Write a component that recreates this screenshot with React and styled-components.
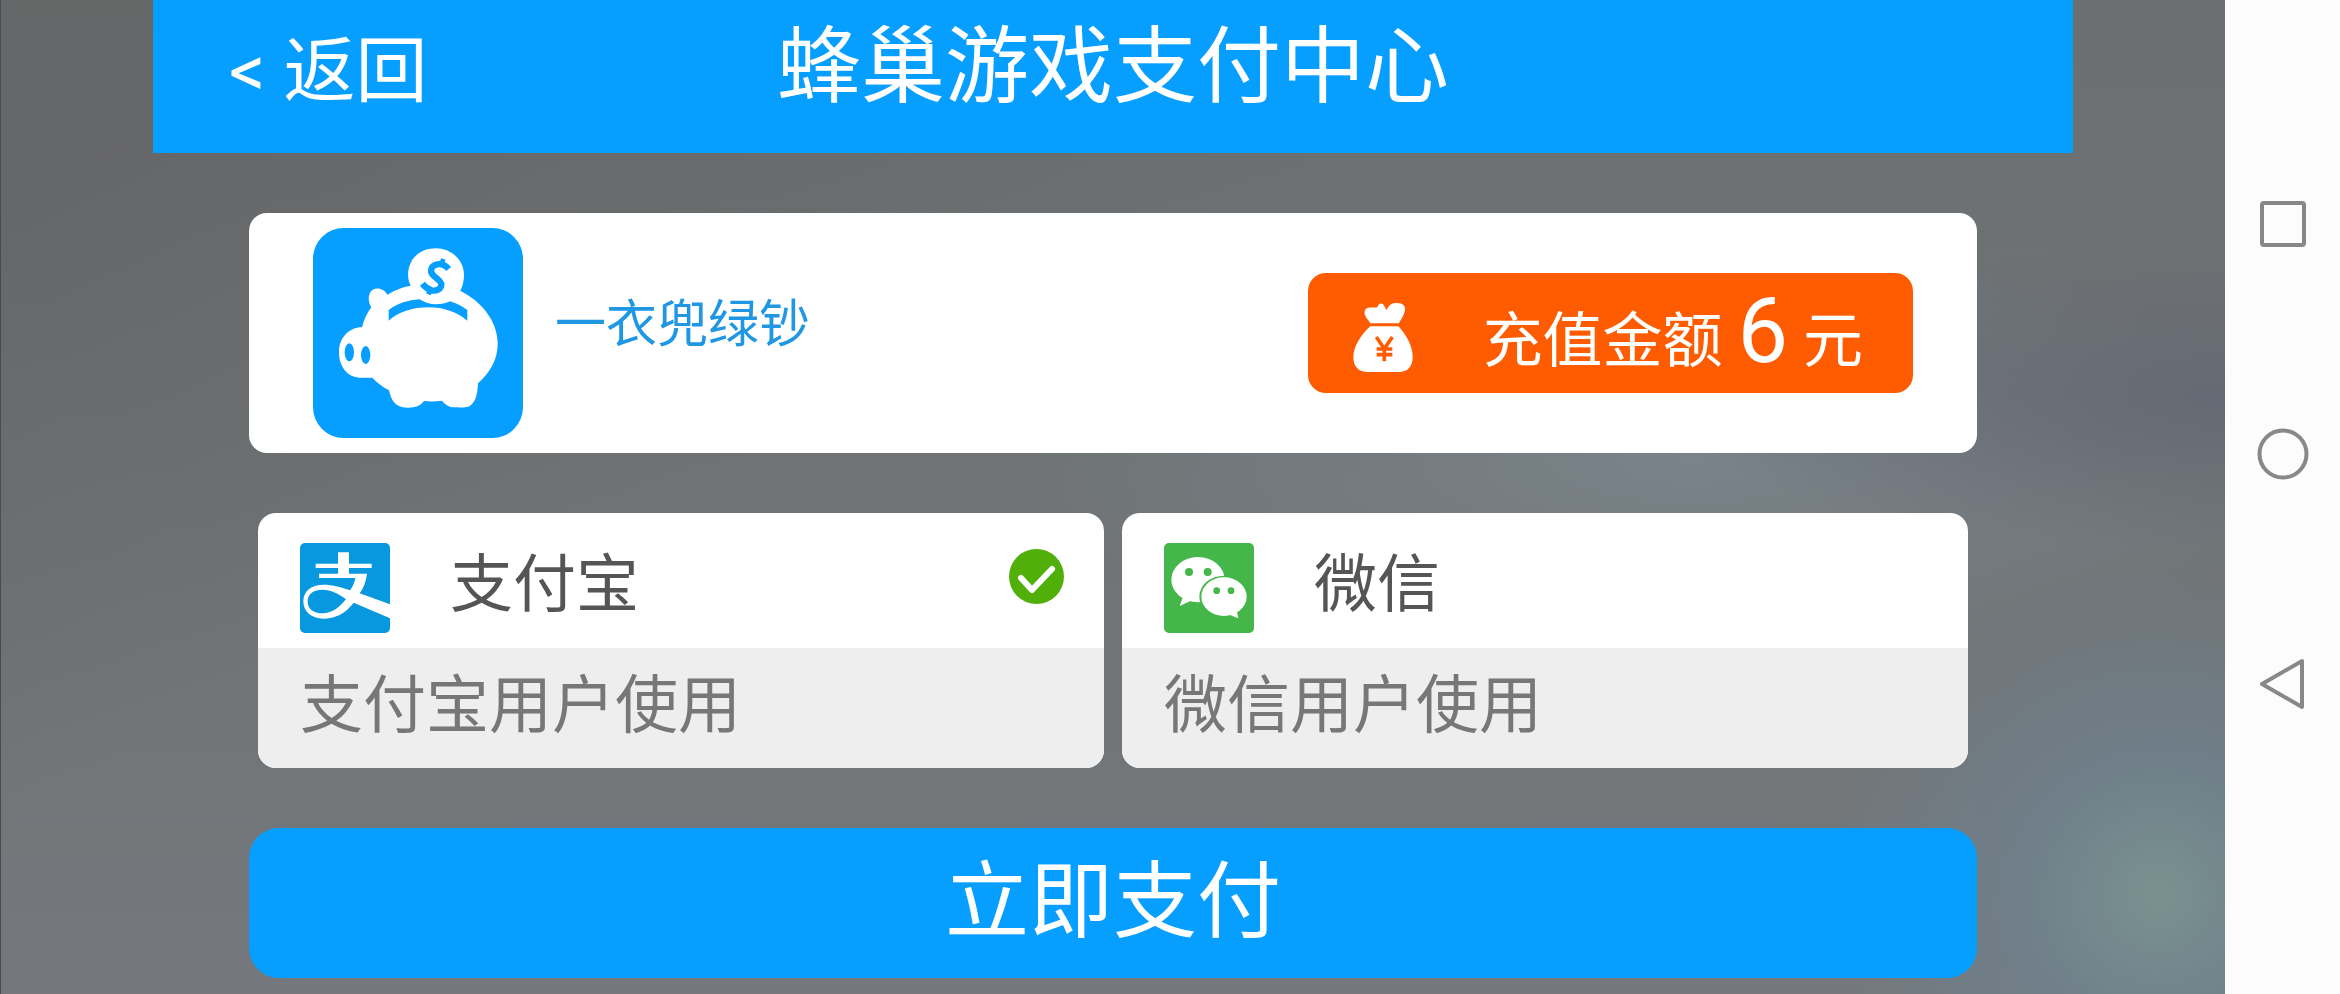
import React, { useState } from "react";
//Styling
import styled, { createGlobalStyle } from "styled-components";

//Brand and Payment Icons
const PiggyBank = () => (
  <svg viewBox="15 16 630 630" width="210" height="210" aria-hidden="true">
    <rect x="15" y="16" width="630" height="630" rx="92" fill="#079fff" />
    <path
      fill="#fff"
      d="M162 314C168 290 178 270 190 254C180 240 178 212 194 201C210 192 230 200 238 216C262 201 284 193 308 189C296 165 298 137 312 113C326 90 354 77 384 77C430 77 468 112 468 157C468 174 464 190 457 205C520 235 569 296 569 362C569 410 548 448 510 482C509 510 504 535 490 546C480 555 464 555 440 554C422 554 412 546 402 534C384 537 364 537 348 535C336 550 324 555 300 555C262 556 250 534 243 503C224 493 206 479 193 465H156C120 465 93 434 93 389C93 346 122 314 162 314Z"
    />
    <path
      fill="#079fff"
      d="M242 262C270 242 300 232 335 230C350 240 366 245 384 245C400 245 414 242 426 236C446 242 464 252 478 262V294C446 268 408 254 362 254C312 254 272 268 242 294Z"
    />
    <ellipse cx="124" cy="389" rx="14" ry="27" fill="#079fff" />
    <ellipse cx="173" cy="397" rx="14" ry="27" fill="#079fff" />
    <path
      fill="none"
      stroke="#079fff"
      strokeWidth="19"
      d="M422 139C414 129 402 123 388 125C370 128 365 143 373 155C382 168 400 172 400 186C399 200 384 206 371 203C357 199 351 193 343 183"
    />
    <path
      stroke="#079fff"
      strokeWidth="14"
      d="M399 128L406 109M368 199L361 215"
    />
  </svg>
);

const MoneyBag = () => (
  <svg viewBox="40 31 180 207" width="60" height="69" aria-hidden="true">
    <path
      fill="#fff"
      d="M92 92C86 80 72 70 75 56C78 40 100 46 113 44C116 30 130 28 135 42L140 52C148 42 150 32 168 31C186 30 197 38 196 50C195 66 184 80 178 92Z"
    />
    <path
      fill="#fff"
      d="M92 101H176C198 124 220 160 219 194C219 218 206 238 180 238H82C54 238 41 218 41 194C41 160 66 124 92 101Z"
    />
    <path
      fill="none"
      stroke="#ff5b00"
      strokeWidth="11"
      d="M110 133L134 168L158 133M134 166V206M111 169H158M111 186H158"
    />
  </svg>
);

const Alipay = () => (
  <svg viewBox="0 0 270 270" width="90" height="90" aria-hidden="true">
    <rect width="270" height="270" rx="15" fill="#0898e0" />
    <path
      fill="#fff"
      d="M114 28H147V62H215V75H147V92H201C198 117 190 136 179 151L271 184V226L161 179C136 212 104 227 70 227C34 227 10 206 10 175C10 144 34 125 70 125C98 125 126 133 150 142C159 131 163 119 166 105H57V92H114V75H47V62H114ZM138 168C116 152 92 140 68 140C40 140 23 152 23 176C23 197 40 211 68 211C98 211 121 190 138 168Z"
    />
  </svg>
);

const Wechat = () => (
  <svg viewBox="14 14 270 270" width="90" height="90" aria-hidden="true">
    <rect x="14" y="14" width="270" height="270" rx="15" fill="#45b649" />
    <ellipse cx="116" cy="124" rx="80" ry="68" fill="#fff" />
    <path d="M72 172L61 203L98 186Z" fill="#fff" />
    <ellipse cx="194" cy="175" rx="74" ry="63" fill="#45b649" />
    <ellipse cx="194" cy="175" rx="68" ry="58" fill="#fff" />
    <path d="M206 228L237 240L231 212Z" fill="#fff" />
    <circle cx="89" cy="101" r="12" fill="#45b649" />
    <circle cx="145" cy="101" r="12" fill="#45b649" />
    <circle cx="172" cy="157" r="10" fill="#45b649" />
    <circle cx="215" cy="157" r="10" fill="#45b649" />
  </svg>
);

const CheckBadge = () => (
  <svg viewBox="0 0 55 55" width="55" height="55" aria-hidden="true">
    <circle cx="27.5" cy="27.5" r="27.5" fill="#51af0a" />
    <path
      d="M12 29L23 41L43 20"
      fill="none"
      stroke="#fff"
      strokeWidth="6"
      strokeLinecap="round"
      strokeLinejoin="round"
    />
  </svg>
);

const methods = [
  { id: "alipay", name: "支付宝", note: "支付宝用户使用", Icon: Alipay },
  { id: "wechat", name: "微信", note: "微信用户使用", Icon: Wechat },
];

const App = () => {
  const [selected, setSelected] = useState("alipay");

  return (
    <>
      <GlobalStyle />
      <Screen>
        <Backdrop>
          <Header>
            <BackButton type="button">&lt; 返回</BackButton>
            <Title>蜂巢游戏支付中心</Title>
          </Header>
          <Content>
            <Order>
              <PiggyBank />
              <Product>一衣兜绿钞</Product>
              <Amount>
                <MoneyBag />
                <p>
                  充值金额 <strong>6</strong> 元
                </p>
              </Amount>
            </Order>
            <Methods>
              {methods.map(({ id, name, note, Icon }) => (
                <Method key={id}>
                  <input
                    type="radio"
                    name="method"
                    value={id}
                    checked={selected === id}
                    onChange={() => setSelected(id)}
                  />
                  <MethodHead>
                    <Icon />
                    <MethodName>{name}</MethodName>
                    {selected === id && (
                      <Badge>
                        <CheckBadge />
                      </Badge>
                    )}
                  </MethodHead>
                  <MethodNote>{note}</MethodNote>
                </Method>
              ))}
            </Methods>
            <PayButton type="button">立即支付</PayButton>
          </Content>
        </Backdrop>
        {/* Android system keys, landscape */}
        <SystemBar aria-label="系统导航">
          <SystemKey type="button" aria-label="最近任务">
            <svg viewBox="0 0 54 54" width="54" height="54">
              <rect x="6" y="6" width="42" height="42" rx="2" />
            </svg>
          </SystemKey>
          <SystemKey type="button" aria-label="主屏幕">
            <svg viewBox="0 0 54 54" width="54" height="54">
              <circle cx="27" cy="27" r="23.5" />
            </svg>
          </SystemKey>
          <SystemKey type="button" aria-label="返回上一页">
            <svg viewBox="0 0 54 54" width="54" height="54">
              <path d="M6 27L46 4V50Z" />
            </svg>
          </SystemKey>
        </SystemBar>
      </Screen>
    </>
  );
};

const GlobalStyle = createGlobalStyle`
  * {
    margin: 0;
    padding: 0;
    box-sizing: border-box;
  }
  body {
    font-family: Roboto, "Noto Sans CJK SC", sans-serif;
  }
  button {
    font: inherit;
    border: none;
    background: none;
    cursor: pointer;
  }
  svg {
    display: block;
    flex-shrink: 0;
  }
`;

const Screen = styled.div`
  display: flex;
  min-height: 100vh;
`;

const Backdrop = styled.main`
  flex: 1;
  min-width: 0;
  padding: 0 152px;
  border-left: 1px solid #4a4b4c;
  background:
    radial-gradient(circle at 97% 90%, rgba(122, 150, 148, 0.85), rgba(108, 134, 152, 0.5) 6%, transparent 14%),
    radial-gradient(ellipse at 100% 40%, rgba(98, 102, 114, 0.8), transparent 18%),
    radial-gradient(ellipse at 76% 46%, rgba(126, 138, 146, 0.7), transparent 28%),
    linear-gradient(155deg, rgba(100, 100, 101, 0.8) 10%, transparent 40%),
    linear-gradient(to bottom, #6b6f70, #6f7375 45%, #74787c);
`;

const Header = styled.header`
  display: grid;
  grid-template-columns: 1fr auto 1fr;
  align-items: baseline;
  padding: 0 76px 17px;
  background: #079fff;
  color: #fff;
`;

const BackButton = styled.button`
  justify-self: start;
  color: #fff;
  font-size: 72px;
  line-height: 100px;
`;

const Title = styled.h1`
  font-size: 84px;
  font-weight: 400;
  line-height: 136px;
`;

const Content = styled.div`
  display: flex;
  flex-direction: column;
  gap: 60px;
  padding: 60px 5% 15px;
`;

const Order = styled.section`
  display: flex;
  align-items: center;
  padding: 15px 64px;
  border-radius: 18px;
  background: #fff;
`;

const Product = styled.h2`
  flex: 1;
  padding: 0 32px 16px;
  color: #1f97e3;
  font-size: 51px;
  font-weight: 400;
  line-height: 60px;
`;

const Amount = styled.div`
  display: flex;
  align-items: center;
  gap: 70px;
  height: 120px;
  padding: 8px 50px 0 45px;
  border-radius: 18px;
  background: #ff5b00;
  color: #fff;
  font-size: 60px;
  line-height: 60px;
  strong {
    font-size: 90px;
    font-weight: 400;
  }
`;

const Methods = styled.fieldset`
  display: grid;
  grid-template-columns: 1fr 1fr;
  gap: 18px;
  padding: 0 9px;
  border: none;
`;

const Method = styled.label`
  position: relative;
  overflow: hidden;
  border-radius: 18px;
  background: #fff;
  cursor: pointer;
  input {
    position: absolute;
    opacity: 0;
  }
`;

const MethodHead = styled.div`
  display: flex;
  gap: 60px;
  padding: 30px 40px 15px 42px;
`;

const MethodName = styled.span`
  flex: 1;
  color: #555;
  font-size: 63px;
  line-height: 84px;
`;

const Badge = styled.span`
  padding-top: 6px;
`;

const MethodNote = styled.p`
  padding: 0 42px 4px;
  background: #eee;
  color: #777;
  font-size: 63px;
  line-height: 116px;
`;

const PayButton = styled.button`
  border-radius: 30px;
  background: #079fff;
  color: #fff;
  font-size: 84px;
  line-height: 150px;
`;

const SystemBar = styled.nav`
  display: flex;
  flex-direction: column;
  align-items: center;
  gap: 176px;
  width: 115px;
  padding-top: 197px;
  background: #fcfcfc;
`;

const SystemKey = styled.button`
  svg {
    fill: none;
    stroke: #888;
    stroke-width: 4;
    stroke-linejoin: round;
  }
`;

export default App;
